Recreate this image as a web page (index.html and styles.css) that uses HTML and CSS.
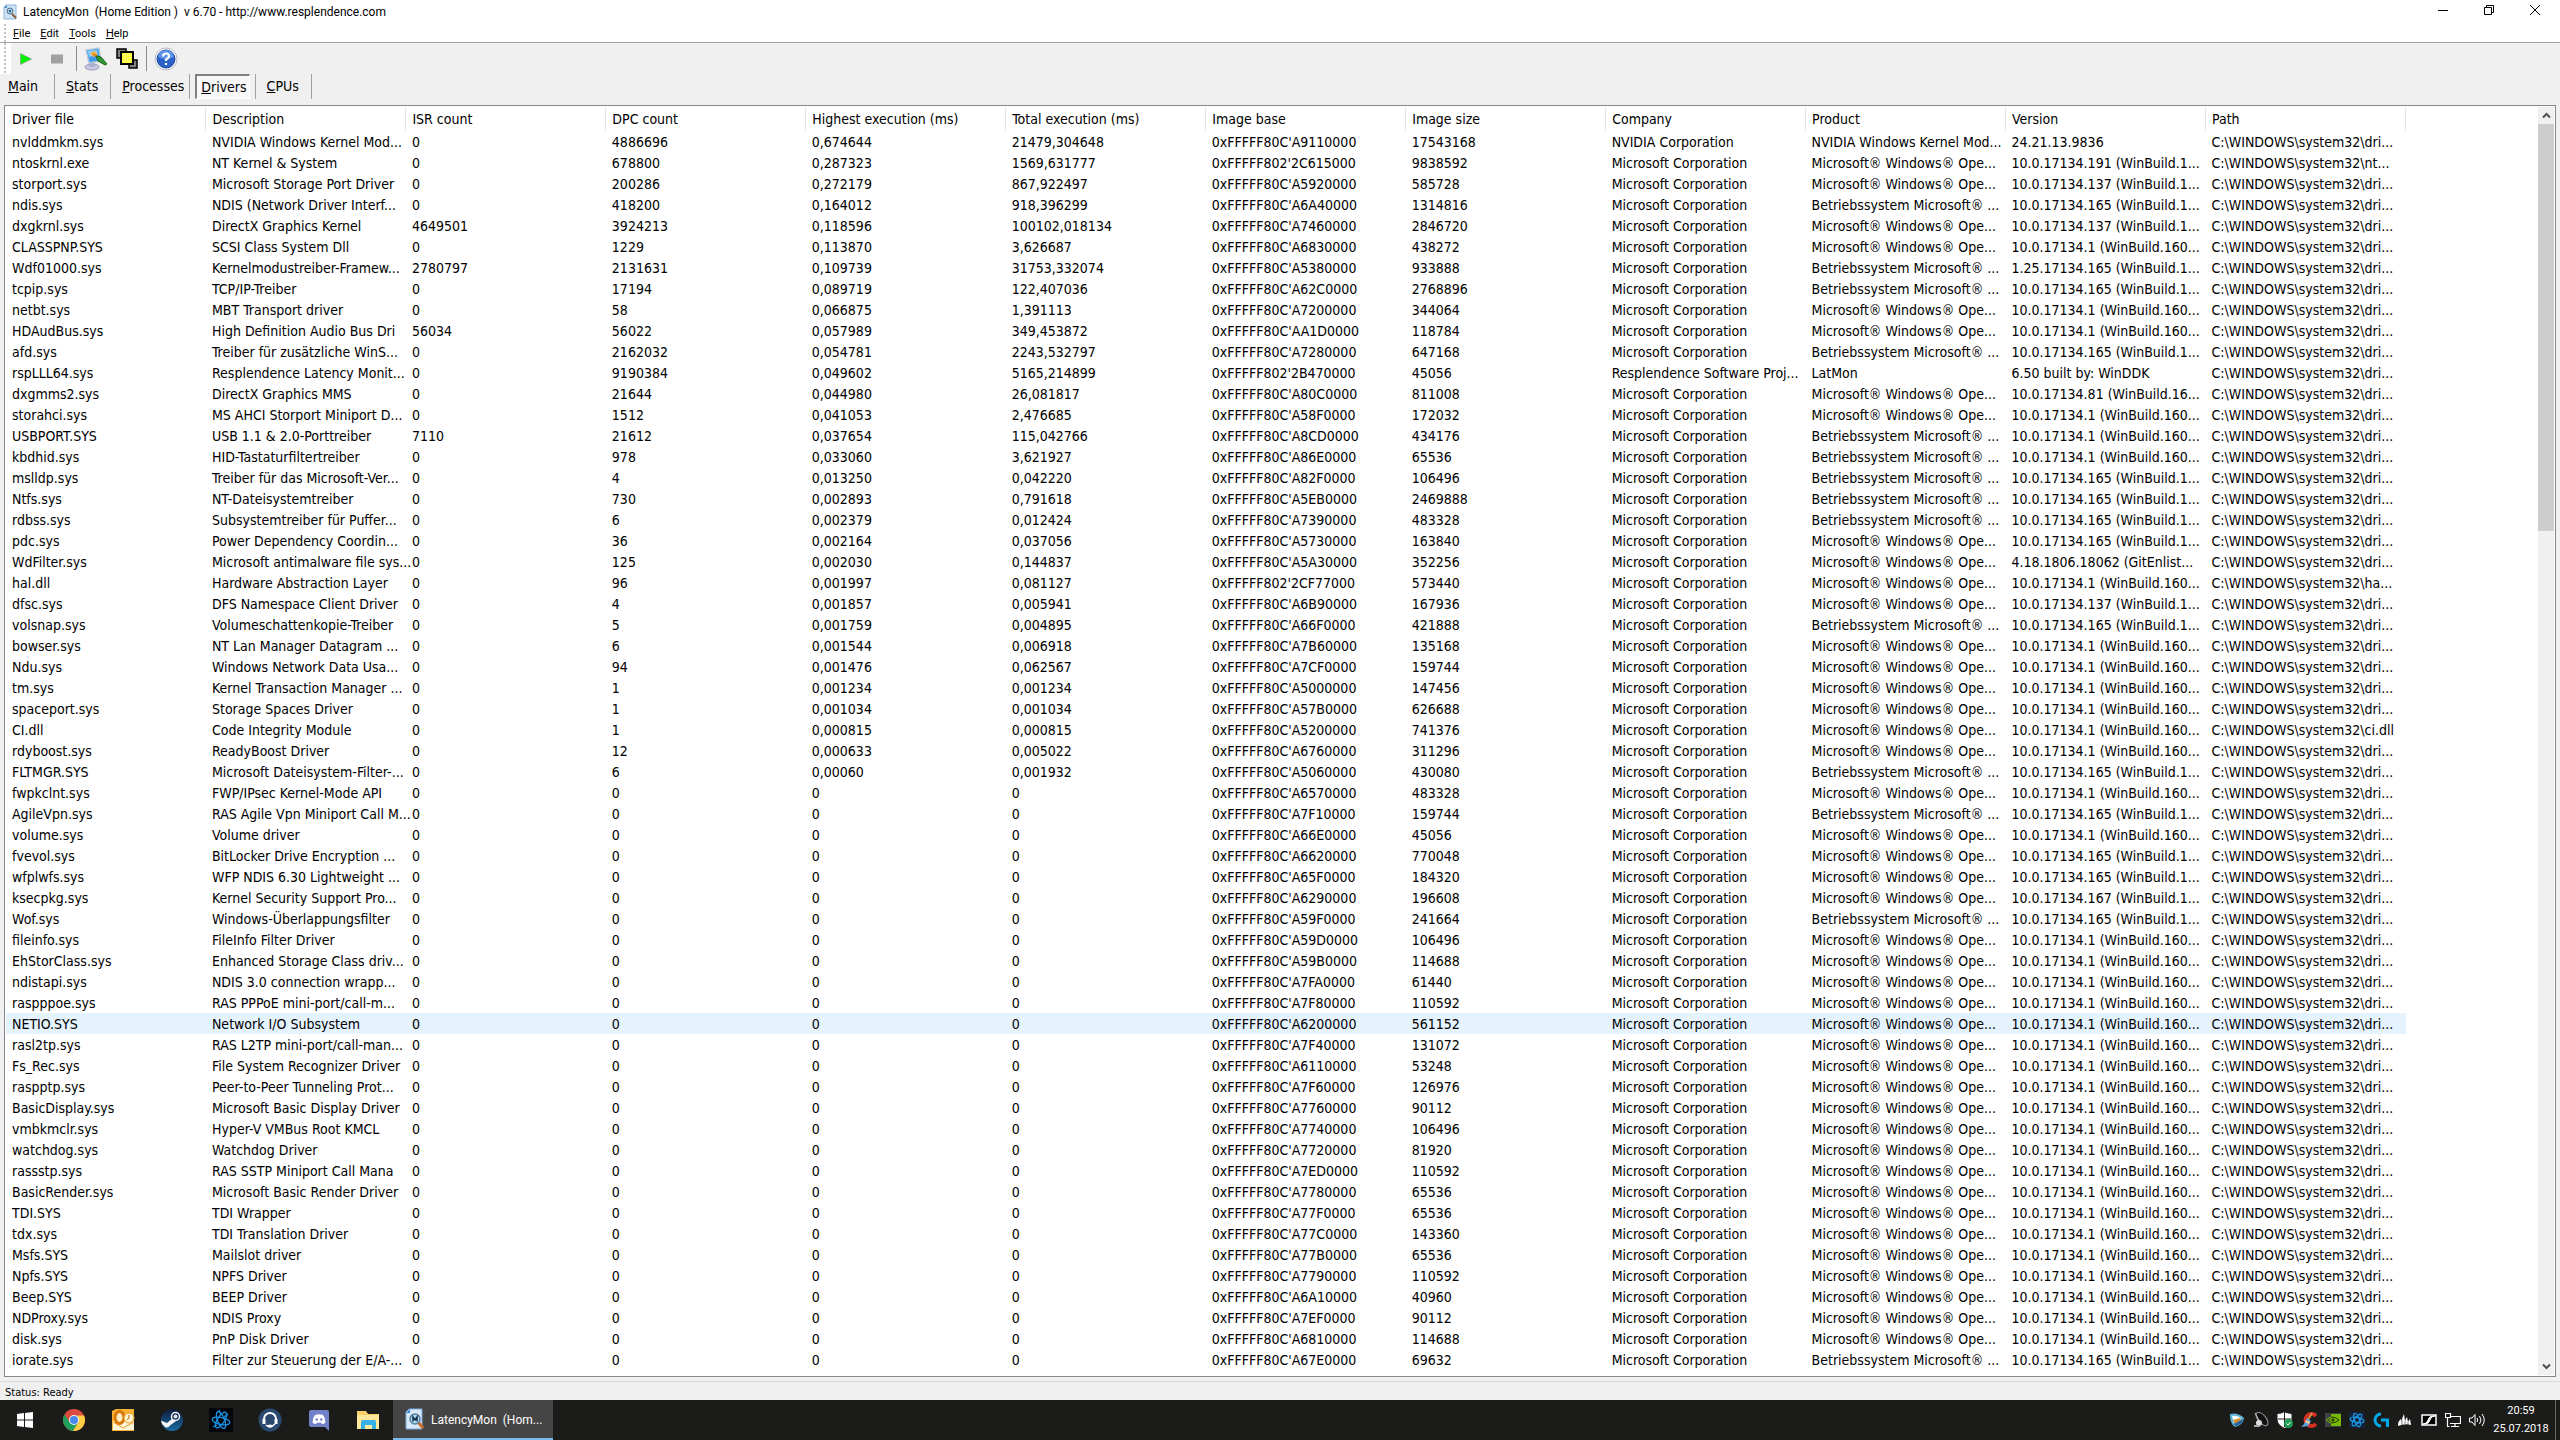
FILE: index.html
```
<!DOCTYPE html>
<html lang="en">
<head>
    <meta charset="UTF-8">
    <meta name="viewport" content="width=device-width, initial-scale=1.0">
    <title>LatencyMon</title>
    <link rel="stylesheet" href="styles.css">
</head>
<body>
    <header class="titlebar">
        <svg class="app-icon" width="14" height="16" viewBox="0 0 14 16">
            <path d="M3 1h10v14H1V3z" fill="#cfe3f7" stroke="#8fb3d9"/>
            <path d="M1 4l3-3v3z" fill="#4d8fd0"/>
            <circle cx="7" cy="7" r="3" fill="#9fd0ee" stroke="#54708c"/>
            <circle cx="7" cy="7" r="1" fill="#1d2c3c"/>
            <path d="M9 10l4 4" stroke="#8a5a3c" stroke-width="2"/>
        </svg>
        <span class="window-title">LatencyMon&nbsp; (Home Edition )&nbsp; v 6.70 - http://www.resplendence.com</span>
        <div class="window-buttons">
            <button type="button" aria-label="Minimize"><svg width="12" height="12" viewBox="0 0 12 12"><path d="M1 6.5h10" stroke="#000" fill="none"/></svg></button>
            <button type="button" aria-label="Restore"><svg width="12" height="12" viewBox="0 0 12 12"><path d="M1.5 3.5h7v7h-7zM3.5 3.500v-2h7v7h-2" stroke="#000" fill="none"/></svg></button>
            <button type="button" aria-label="Close"><svg width="12" height="12" viewBox="0 0 12 12"><path d="M1 1l10 10M11 1L1 11" stroke="#000" fill="none"/></svg></button>
        </div>
    </header>

    <nav class="menubar">
        <button type="button"><u>F</u>ile</button>
        <button type="button"><u>E</u>dit</button>
        <button type="button"><u>T</u>ools</button>
        <button type="button"><u>H</u>elp</button>
    </nav>

    <div class="toolbar">
        <button type="button" aria-label="Start"><svg width="24" height="24" viewBox="0 0 24 24"><path d="M6.5 6.500v11L17.5 12z" fill="#00f400" stroke="#8c8c8c" stroke-width="0.6"/></svg></button>
        <button type="button" aria-label="Stop"><svg width="24" height="24" viewBox="0 0 24 24"><path d="M6 7.500h12v9H6z" fill="#a0a0a0"/></svg></button>
        <span class="divider"></span>
        <button type="button" aria-label="Options">
            <svg width="24" height="24" viewBox="0 0 24 24">
                <ellipse cx="8" cy="20" rx="7" ry="3" fill="#c9cbe0" stroke="#9a9cba"/>
                <path d="M5 15h6v5H5z" fill="#aeb0d0"/>
                <path d="M2 3l13-2 2 13-12 2z" fill="#3f9be6" stroke="#b9cbe0" stroke-width="1.5"/>
                <path d="M4 4l9-1 1 4-9 3z" fill="#8fd0ff"/>
                <path d="M6 6l5-2 3 4-5 2z" fill="#f3b43c"/>
                <path d="M9 7l8 5" stroke="#c98522" stroke-width="2"/>
                <path d="M12 9l5 1 6 7-2 1-7-4z" fill="#2f9a2f" stroke="#1d641d"/>
            </svg>
        </button>
        <button type="button" aria-label="Windows">
            <svg width="24" height="24" viewBox="0 0 24 24">
                <path d="M2 2h9v9H2zM14 13h8v8h-8z" fill="#808080" stroke="#000" stroke-width="1.5"/>
                <path d="M6 5h12v12H6z" fill="#fffb3c" stroke="#000" stroke-width="2"/>
                <path d="M8 8h8M8 11h8M8 14h8" stroke="#fffdb8" stroke-dasharray="1 1"/>
            </svg>
        </button>
        <span class="divider"></span>
        <button type="button" aria-label="Help">
            <svg width="24" height="24" viewBox="0 0 24 24">
                <circle cx="12" cy="12" r="11" fill="#fff" stroke="#b4b8c4"/>
                <circle cx="12" cy="12" r="9" fill="#2b62c9" stroke="#1c3f94"/>
                <path d="M4 10a8 7 0 0 1 16 0q-8 4-16 0z" fill="#5c92ea"/>
                <path d="M9 9.500q0-3 3-3t3 2.500q0 2-3 3.500v1.500M12 16v2" fill="none" stroke="#fff" stroke-width="2.2"/>
            </svg>
        </button>
    </div>

    <nav class="tabs">
        <button type="button"><u>M</u>ain</button>
        <button type="button"><u>S</u>tats</button>
        <button type="button"><u>P</u>rocesses</button>
        <button type="button" class="active"><u>D</u>rivers</button>
        <button type="button"><u>C</u>PUs</button>
    </nav>

    <main class="listview">
        <div class="list-body">
            <table>
                <thead>
                    <tr>
                        <th>Driver file</th>
                        <th>Description</th>
                        <th>ISR count</th>
                        <th>DPC count</th>
                        <th>Highest execution (ms)</th>
                        <th>Total execution (ms)</th>
                        <th>Image base</th>
                        <th>Image size</th>
                        <th>Company</th>
                        <th>Product</th>
                        <th>Version</th>
                        <th>Path</th>
                    </tr>
                </thead>
                <tbody id="drivers"></tbody>
            </table>
        </div>
        <div class="scrollbar">
            <button type="button" aria-label="Scroll up"><svg width="9" height="7" viewBox="0 0 9 7"><path d="M1 5.500l3.500-3.500L8 5.500" fill="none" stroke="#505050" stroke-width="2"/></svg></button>
            <div class="track"><div class="thumb"></div></div>
            <button type="button" aria-label="Scroll down"><svg width="9" height="7" viewBox="0 0 9 7"><path d="M1 1.500L4.500 5 8 1.500" fill="none" stroke="#505050" stroke-width="2"/></svg></button>
        </div>
    </main>

    <div class="statusbar">Status: Ready</div>

    <footer class="taskbar">
        <div class="launchers">
            <button type="button" aria-label="Start menu"><svg width="24" height="24" viewBox="0 0 24 24"><path d="M4 6l7-1v6.500H4zM12 5l8-1v7.500h-8zM4 12.500h7V19l-7-1zM12 12.500h8V20l-8-1z" fill="#fff"/></svg></button>
            <button type="button" aria-label="Chrome">
                <svg width="24" height="24" viewBox="0 0 24 24">
                    <circle cx="12" cy="12" r="11" fill="#dd4b3e"/>
                    <path d="M2.500 6.500A11 11 0 0 0 11 23l5-8.500-8 0z" fill="#1fa05a"/>
                    <path d="M22 7.500A11 11 0 0 1 11 23l5.500-9L15 7.500z" fill="#ffcd41"/>
                    <circle cx="12" cy="12" r="5" fill="#f4f4f4"/>
                    <circle cx="12" cy="12" r="4" fill="#4688f0"/>
                </svg>
            </button>
            <button type="button" aria-label="Outlook">
                <svg width="24" height="24" viewBox="0 0 24 24">
                    <path d="M1 3l4-2h18v22H1z" fill="#f9b233"/>
                    <path d="M2 13h21v9H2z" fill="#fdf3d8"/>
                    <path d="M2 14l10 6 11-6" fill="none" stroke="#eda02c"/>
                    <ellipse cx="8.500" cy="9.500" rx="4.500" ry="6" fill="#fdebc0" stroke="#d9790b" stroke-width="3"/>
                    <circle cx="18" cy="10" r="5" fill="#fff3cf" stroke="#e2971f"/>
                    <path d="M18 7v3l-2 2" fill="none" stroke="#b56a12"/>
                </svg>
            </button>
            <button type="button" aria-label="Steam">
                <svg width="24" height="24" viewBox="0 0 24 24">
                    <defs><linearGradient id="steam" x2="0" y2="1"><stop offset="0" stop-color="#101a3a"/><stop offset="1" stop-color="#1a6ca5"/></linearGradient></defs>
                    <circle cx="12" cy="12" r="11" fill="url(#steam)"/>
                    <path d="M1 12.500l6 2.500 6-5 3 3-6 4.500q-2 3-5 1.500L2 16z" fill="#f2f4f7"/>
                    <circle cx="15.500" cy="8.500" r="4" fill="#132a52" stroke="#f2f4f7" stroke-width="1.5"/>
                    <circle cx="15.500" cy="8.500" r="2" fill="#dfe5ee"/>
                </svg>
            </button>
            <button type="button" aria-label="Battle.net">
                <svg width="24" height="24" viewBox="0 0 24 24">
                    <path d="M0 0h24v24H0z" fill="#020509"/>
                    <g fill="none" stroke="#1a8fe3" stroke-width="1.3">
                        <ellipse cx="12" cy="13" rx="9" ry="3.500" transform="rotate(12 12 13)"/>
                        <ellipse cx="12" cy="12" rx="9" ry="3.500" transform="rotate(68 12 12)"/>
                        <ellipse cx="12" cy="12" rx="9" ry="3.500" transform="rotate(124 12 12)"/>
                        <path d="M10 2l2 5M19 6l-4 3M4 19l4-2"/>
                    </g>
                </svg>
            </button>
            <button type="button" aria-label="TeamSpeak">
                <svg width="24" height="24" viewBox="0 0 24 24">
                    <circle cx="12" cy="12" r="11.500" fill="#2a4a70"/>
                    <path d="M6 13v-2a6 6 0 0 1 12 0v2" fill="none" stroke="#fff" stroke-width="2"/>
                    <path d="M4.500 11h3v5h-3zM16.500 11h3v5h-3z" fill="#fff"/>
                    <path d="M8 17q4 4 9-1" fill="none" stroke="#fff" stroke-width="1.5"/>
                    <ellipse cx="12" cy="18" rx="2.500" ry="1.500" fill="#fff"/>
                </svg>
            </button>
            <button type="button" aria-label="Discord">
                <svg width="24" height="24" viewBox="0 0 24 24">
                    <path d="M4 2h16q2 0 2 2v19l-4-4H4q-2 0-2-2V4q0-2 2-2z" fill="#7280ca"/>
                    <path d="M8 7q4-1.500 8 0 2.500 3 2.500 7.500-1.500 1.500-3.500 1.500l-1-1.500q-2 .5-4 0L9 16q-2 0-3.500-1.500Q5.500 10 8 7z" fill="#fff"/>
                    <circle cx="9.700" cy="11.500" r="1.300" fill="#7280ca"/>
                    <circle cx="14.300" cy="11.500" r="1.300" fill="#7280ca"/>
                </svg>
            </button>
            <button type="button" aria-label="Explorer">
                <svg width="24" height="24" viewBox="0 0 24 24">
                    <path d="M1 3h9l2 3h11v15H1z" fill="#f7d26a"/>
                    <path d="M1 7h22v14H1z" fill="#ffe89b"/>
                    <path d="M5 21v-7q0-2 2-2h11q2 0 2 2v7h-4v-4H9v4z" fill="#35b0e8"/>
                </svg>
            </button>
        </div>
        <button type="button" class="task">
            <svg width="20" height="24" viewBox="0 0 20 24">
                <path d="M4 1h13v20H1V4z" fill="#d6e8fa" stroke="#7faadb"/>
                <path d="M1 5l4-4v4z" fill="#3f86d0"/>
                <path d="M13 14l5 6" stroke="#c8702c" stroke-width="3"/>
                <circle cx="10" cy="11" r="5" fill="#a8dcf4" stroke="#5b7d9c" stroke-width="1.5"/>
                <path d="M8 13.500V9l2 3 2-3v4.500" fill="none" stroke="#152c44" stroke-width="1.5"/>
            </svg>
            <span>LatencyMon&nbsp; (Hom...</span>
        </button>
        <div class="tray">
            <svg viewBox="0 0 16 16"><path d="M1 2q8-2 14 4-1 7-9 9-5-3-5-13z" fill="#5fb4d8"/><path d="M3 4q6-1 9 3l-7 4z" fill="#fff"/><path d="M4 8l7-2 1 3-6 3z" fill="#d6902e"/><path d="M5 12l9-5q-1 6-8 7z" fill="#24619d"/></svg>
            <svg viewBox="0 0 16 16"><ellipse cx="9" cy="7" rx="8" ry="4" transform="rotate(50 9 7)" fill="#111" stroke="#999"/><path d="M2 1l5 9" stroke="#ccc"/><circle cx="6" cy="11" r="3" fill="#ddd"/><path d="M1 14h6" stroke="#aaa" stroke-width="2"/></svg>
            <svg viewBox="0 0 16 16"><path d="M7.500 0q3 2 7 2v5q0 6-7 9-7-3-7-9V2q4 0 7-2z" fill="#fff"/><path d="M7.500 0v15M1 7h13" stroke="#1c1c1a"/><circle cx="11.500" cy="11.500" r="4.500" fill="#1f9d55"/><path d="M9.500 11.500l1.500 1.500 2.500-3" fill="none" stroke="#fff"/></svg>
            <svg viewBox="0 0 16 16"><path d="M15 4A6 6 0 1 0 15 12" fill="none" stroke="#d3301f" stroke-width="4"/><path d="M11 1L7 8" stroke="#c88b4c" stroke-width="2"/><path d="M6 6l4 3-3 5-7 1q4-3 6-9z" fill="#5aa4dd"/><path d="M5 8l4 2-1 2-4-2z" fill="#eecb90"/></svg>
            <svg viewBox="0 0 16 16"><path d="M0 1h16v14H0z" fill="#3d4247"/><path d="M6 2h10v12H6z" fill="#76b900"/><path d="M1 8q6-6 13 0-7 6-13 0zM4 8q3-3 7 0-4 3-7 0z" fill="none" stroke="#76b900"/><path d="M6 5q5 0 8 3-3 3-8 3" fill="none" stroke="#26390a"/><circle cx="8" cy="8" r="1.500" fill="#26390a"/></svg>
            <svg viewBox="0 0 16 16"><path d="M0 0h16v16H0z" fill="#14233b"/><g fill="none" stroke="#1b98e6" stroke-width="1.2"><ellipse cx="8" cy="8" rx="7" ry="2.500" transform="rotate(12 8 8)"/><ellipse cx="8" cy="8" rx="7" ry="2.500" transform="rotate(70 8 8)"/><ellipse cx="8" cy="8" rx="7" ry="2.500" transform="rotate(128 8 8)"/></g></svg>
            <svg viewBox="0 0 16 16"><path d="M8 2A6 6 0 1 0 8 14" fill="none" stroke="#00a8e8" stroke-width="3"/><path d="M8 8h6.500v7" fill="none" stroke="#00a8e8" stroke-width="3"/></svg>
            <svg viewBox="0 0 16 16"><path d="M1 13q0-4 3-6l1 3q0-5 2-8l1 7q1-3 2-4l1 5q1-2 2-3l1 6q-6-2-13 1z" fill="#fff"/><path d="M5 9v4M8 9v3M11 10v3" stroke="#1c1c1a" stroke-width="0.6"/></svg>
            <svg viewBox="0 0 16 16"><path d="M1 3h14v10H1z" fill="#000" stroke="#fff" stroke-width="1.5"/><path d="M2 12q4 0 5-4t5-4h2q-4 0-5 4t-5 4z" fill="#fff" stroke="#fff"/></svg>
            <svg viewBox="0 0 16 16"><path d="M5 4.500h10.500v7H5M10 11.500v3M6 14.500h8M.5 1.500h5v4h-5zM2.500 5.500v9h2" fill="none" stroke="#fff" stroke-width="1.2"/></svg>
            <svg viewBox="0 0 16 16"><path d="M.5 6h2.500l3-3.500v11L3 10H.5z" fill="none" stroke="#fff"/><path d="M8 6q1.500 2 0 4M10.500 4q3 4 0 8M13 2q4.500 6 0 12" fill="none" stroke="#fff"/></svg>
        </div>
        <div class="clock"><span>20:59</span><span>25.07.2018</span></div>
        <button type="button" class="show-desktop" aria-label="Show desktop"></button>
    </footer>

    <script src="drivers.js"></script>
</body>
</html>
```
FILE: styles.css
```
* {
    box-sizing: border-box;
}
body {
    display: flex;
    flex-direction: column;
    height: 100vh;
    margin: 0;
    overflow: hidden;
    background: #f0f0f0;
    color: #000;
    font-family: 'DejaVu Sans Condensed', 'DejaVu Sans', sans-serif;
    font-size: 14px;
}
button {
    margin: 0;
    padding: 0;
    border: none;
    background: none;
    color: inherit;
    font: inherit;
}
svg {
    display: block;
    flex: none;
}

/* title and menu */
.titlebar {
    display: flex;
    align-items: center;
    height: 24px;
    padding-left: 3px;
    background: #fff;
    font-family: Roboto, sans-serif;
    font-size: 12px;
}
.window-title {
    margin-left: 6px;
}
.window-buttons {
    display: flex;
    align-self: flex-start;
    margin-left: auto;
    padding-right: 2px;
}
.window-buttons button {
    display: flex;
    align-items: center;
    justify-content: center;
    width: 46px;
    height: 20px;
}
.menubar {
    display: flex;
    gap: 10px;
    height: 19px;
    padding-left: 4px;
    background: #fff;
    border-bottom: 1px solid #a0a0a0;
    font-family: Roboto, sans-serif;
    font-size: 11px;
}

/* dotted grips at the left edge */
.menubar::before,
.toolbar::before {
    content: "";
    align-self: stretch;
    width: 2px;
    background: repeating-linear-gradient(#c4c4c4 0 2px, #fff 2px 4px);
}
.menubar::before {
    margin-right: -3px;
}

/* toolbar */
.toolbar {
    display: flex;
    align-items: center;
    gap: 7px;
    height: 31px;
    padding-left: 4px;
    background: linear-gradient(to right, #fff 11px, #f0f0f0 11px);
}
.toolbar::before {
    margin-right: 1px;
}
.toolbar .divider {
    width: 1px;
    height: 25px;
    background: #8c8c8c;
}

/* tabs */
.tabs {
    display: flex;
    height: 31px;
    padding-bottom: 6px;
}
.tabs button {
    padding: 0 12px 2px 11px;
    border-right: 1px solid #a0a0a0;
}
.tabs button:first-child {
    padding-left: 8px;
    padding-right: 16px;
}
.tabs button:nth-child(3) {
    padding-right: 5px;
}
.tabs .active {
    margin: 0 5px;
    padding: 0 2px 0 4px;
    border: 1px solid #fff;
    border-top: 2px solid #808080;
    border-left: 2px solid #808080;
    background: #f8f8f8;
}
.tabs button:last-child {
    border-left: 1px solid #a0a0a0;
}

/* driver list */
.listview {
    display: flex;
    flex: 1;
    min-height: 0;
    margin: 0 4px 4px;
    padding: 1px;
    border: 1px solid #828790;
    background: #fff;
}
.list-body {
    flex: 1;
    overflow: hidden;
}
table {
    width: 2400px;
    table-layout: fixed;
    border-collapse: collapse;
}
th {
    height: 24px;
    border-right: 1px solid #e5e5e5;
    font-weight: normal;
}
th,
td {
    padding: 0 0 0 6px;
    text-align: left;
    white-space: nowrap;
}
td {
    height: 21px;
    padding-top: 2px;
    line-height: 19px;
}
tr.hot {
    background: #e5f3ff;
}
.scrollbar {
    display: flex;
    flex-direction: column;
    width: 16px;
    background: #f0f0f0;
}
.scrollbar button {
    display: flex;
    align-items: center;
    justify-content: center;
    height: 17px;
}
.track {
    flex: 1;
}
.thumb {
    height: 33%;
    background: #cdcdcd;
}

.statusbar {
    height: 19px;
    padding: 4px 5px 0;
    border-top: 1px solid #d7d7d7;
    font-size: 11px;
    line-height: 14px;
}

/* taskbar */
.taskbar {
    display: flex;
    align-items: stretch;
    height: 40px;
    background: #1b1c1a;
    color: #fff;
    font-family: Roboto, sans-serif;
    font-size: 12px;
}
.launchers {
    display: flex;
    align-items: center;
    gap: 25px;
    padding: 0 13px;
}
.task {
    display: flex;
    align-items: center;
    gap: 6px;
    width: 160px;
    padding: 2px 12px 0;
    border-bottom: 2px solid #76b9ed;
    background: #454545;
    white-space: nowrap;
}
.tray {
    display: flex;
    align-items: center;
    gap: 8px;
    margin-left: auto;
    margin-right: 2px;
}
.tray svg {
    width: 16px;
    height: 16px;
}
.clock {
    display: flex;
    flex-direction: column;
    justify-content: center;
    width: 68px;
    font-size: 11px;
    line-height: 18px;
    text-align: center;
}
.show-desktop {
    width: 5px;
    border-left: 1px solid #6a6a68;
}
```
FILE: drivers.js
```
const MS = 'Microsoft Corporation';
const WIN = 'Microsoft® Windows® Ope...';
const BS = 'Betriebssystem Microsoft® ...';
const V1 = '10.0.17134.1 (WinBuild.160...';
const V137 = '10.0.17134.137 (WinBuild.1...';
const V165 = '10.0.17134.165 (WinBuild.1...';
const DRI = 'C:\\WINDOWS\\system32\\dri...';

// file, description, isr, dpc, highest, total, base, size, product, version, company, path
const drivers = [
    ['nvlddmkm.sys', 'NVIDIA Windows Kernel Mod...', '0', '4886696', '0,674644', '21479,304648', "80C'A9110000", '17543168', 'NVIDIA Windows Kernel Mod...', '24.21.13.9836', 'NVIDIA Corporation'],
    ['ntoskrnl.exe', 'NT Kernel & System', '0', '678800', '0,287323', '1569,631777', "802'2C615000", '9838592', WIN, '10.0.17134.191 (WinBuild.1...', MS, 'C:\\WINDOWS\\system32\\nt...'],
    ['storport.sys', 'Microsoft Storage Port Driver', '0', '200286', '0,272179', '867,922497', "80C'A5920000", '585728', WIN, V137],
    ['ndis.sys', 'NDIS (Network Driver Interf...', '0', '418200', '0,164012', '918,396299', "80C'A6A40000", '1314816', BS, V165],
    ['dxgkrnl.sys', 'DirectX Graphics Kernel', '4649501', '3924213', '0,118596', '100102,018134', "80C'A7460000", '2846720', WIN, V137],
    ['CLASSPNP.SYS', 'SCSI Class System Dll', '0', '1229', '0,113870', '3,626687', "80C'A6830000", '438272', WIN, V1],
    ['Wdf01000.sys', 'Kernelmodustreiber-Framew...', '2780797', '2131631', '0,109739', '31753,332074', "80C'A5380000", '933888', BS, '1.25.17134.165 (WinBuild.1...'],
    ['tcpip.sys', 'TCP/IP-Treiber', '0', '17194', '0,089719', '122,407036', "80C'A62C0000", '2768896', BS, V165],
    ['netbt.sys', 'MBT Transport driver', '0', '58', '0,066875', '1,391113', "80C'A7200000", '344064', WIN, V1],
    ['HDAudBus.sys', 'High Definition Audio Bus Dri', '56034', '56022', '0,057989', '349,453872', "80C'AA1D0000", '118784', WIN, V1],
    ['afd.sys', 'Treiber für zusätzliche WinS...', '0', '2162032', '0,054781', '2243,532797', "80C'A7280000", '647168', BS, V165],
    ['rspLLL64.sys', 'Resplendence Latency Monit...', '0', '9190384', '0,049602', '5165,214899', "802'2B470000", '45056', 'LatMon', '6.50 built by: WinDDK', 'Resplendence Software Proj...'],
    ['dxgmms2.sys', 'DirectX Graphics MMS', '0', '21644', '0,044980', '26,081817', "80C'A80C0000", '811008', WIN, '10.0.17134.81 (WinBuild.16...'],
    ['storahci.sys', 'MS AHCI Storport Miniport D...', '0', '1512', '0,041053', '2,476685', "80C'A58F0000", '172032', WIN, V1],
    ['USBPORT.SYS', 'USB 1.1 & 2.0-Porttreiber', '7110', '21612', '0,037654', '115,042766', "80C'A8CD0000", '434176', BS, V1],
    ['kbdhid.sys', 'HID-Tastaturfiltertreiber', '0', '978', '0,033060', '3,621927', "80C'A86E0000", '65536', BS, V1],
    ['mslldp.sys', 'Treiber für das Microsoft-Ver...', '0', '4', '0,013250', '0,042220', "80C'A82F0000", '106496', BS, V165],
    ['Ntfs.sys', 'NT-Dateisystemtreiber', '0', '730', '0,002893', '0,791618', "80C'A5EB0000", '2469888', BS, V165],
    ['rdbss.sys', 'Subsystemtreiber für Puffer...', '0', '6', '0,002379', '0,012424', "80C'A7390000", '483328', BS, V165],
    ['pdc.sys', 'Power Dependency Coordin...', '0', '36', '0,002164', '0,037056', "80C'A5730000", '163840', WIN, V165],
    ['WdFilter.sys', 'Microsoft antimalware file sys...', '0', '125', '0,002030', '0,144837', "80C'A5A30000", '352256', WIN, '4.18.1806.18062 (GitEnlist...'],
    ['hal.dll', 'Hardware Abstraction Layer', '0', '96', '0,001997', '0,081127', "802'2CF77000", '573440', WIN, V1, MS, 'C:\\WINDOWS\\system32\\ha...'],
    ['dfsc.sys', 'DFS Namespace Client Driver', '0', '4', '0,001857', '0,005941', "80C'A6B90000", '167936', WIN, V137],
    ['volsnap.sys', 'Volumeschattenkopie-Treiber', '0', '5', '0,001759', '0,004895', "80C'A66F0000", '421888', BS, V165],
    ['bowser.sys', 'NT Lan Manager Datagram ...', '0', '6', '0,001544', '0,006918', "80C'A7B60000", '135168', WIN, V1],
    ['Ndu.sys', 'Windows Network Data Usa...', '0', '94', '0,001476', '0,062567', "80C'A7CF0000", '159744', WIN, V1],
    ['tm.sys', 'Kernel Transaction Manager ...', '0', '1', '0,001234', '0,001234', "80C'A5000000", '147456', WIN, V1],
    ['spaceport.sys', 'Storage Spaces Driver', '0', '1', '0,001034', '0,001034', "80C'A57B0000", '626688', WIN, V1],
    ['CI.dll', 'Code Integrity Module', '0', '1', '0,000815', '0,000815', "80C'A5200000", '741376', WIN, V1, MS, 'C:\\WINDOWS\\system32\\ci.dll'],
    ['rdyboost.sys', 'ReadyBoost Driver', '0', '12', '0,000633', '0,005022', "80C'A6760000", '311296', WIN, V1],
    ['FLTMGR.SYS', 'Microsoft Dateisystem-Filter-...', '0', '6', '0,00060', '0,001932', "80C'A5060000", '430080', BS, V165],
    ['fwpkclnt.sys', 'FWP/IPsec Kernel-Mode API', '0', '0', '0', '0', "80C'A6570000", '483328', WIN, V1],
    ['AgileVpn.sys', 'RAS Agile Vpn Miniport Call M...', '0', '0', '0', '0', "80C'A7F10000", '159744', BS, V165],
    ['volume.sys', 'Volume driver', '0', '0', '0', '0', "80C'A66E0000", '45056', WIN, V1],
    ['fvevol.sys', 'BitLocker Drive Encryption ...', '0', '0', '0', '0', "80C'A6620000", '770048', WIN, V165],
    ['wfplwfs.sys', 'WFP NDIS 6.30 Lightweight ...', '0', '0', '0', '0', "80C'A65F0000", '184320', WIN, V165],
    ['ksecpkg.sys', 'Kernel Security Support Pro...', '0', '0', '0', '0', "80C'A6290000", '196608', WIN, '10.0.17134.167 (WinBuild.1...'],
    ['Wof.sys', 'Windows-Überlappungsfilter', '0', '0', '0', '0', "80C'A59F0000", '241664', BS, V165],
    ['fileinfo.sys', 'FileInfo Filter Driver', '0', '0', '0', '0', "80C'A59D0000", '106496', WIN, V1],
    ['EhStorClass.sys', 'Enhanced Storage Class driv...', '0', '0', '0', '0', "80C'A59B0000", '114688', WIN, V1],
    ['ndistapi.sys', 'NDIS 3.0 connection wrapp...', '0', '0', '0', '0', "80C'A7FA0000", '61440', WIN, V1],
    ['raspppoe.sys', 'RAS PPPoE mini-port/call-m...', '0', '0', '0', '0', "80C'A7F80000", '110592', WIN, V1],
    ['NETIO.SYS', 'Network I/O Subsystem', '0', '0', '0', '0', "80C'A6200000", '561152', WIN, V1],
    ['rasl2tp.sys', 'RAS L2TP mini-port/call-man...', '0', '0', '0', '0', "80C'A7F40000", '131072', WIN, V1],
    ['Fs_Rec.sys', 'File System Recognizer Driver', '0', '0', '0', '0', "80C'A6110000", '53248', WIN, V1],
    ['raspptp.sys', 'Peer-to-Peer Tunneling Prot...', '0', '0', '0', '0', "80C'A7F60000", '126976', WIN, V1],
    ['BasicDisplay.sys', 'Microsoft Basic Display Driver', '0', '0', '0', '0', "80C'A7760000", '90112', WIN, V1],
    ['vmbkmclr.sys', 'Hyper-V VMBus Root KMCL', '0', '0', '0', '0', "80C'A7740000", '106496', WIN, V1],
    ['watchdog.sys', 'Watchdog Driver', '0', '0', '0', '0', "80C'A7720000", '81920', WIN, V1],
    ['rassstp.sys', 'RAS SSTP Miniport Call Mana', '0', '0', '0', '0', "80C'A7ED0000", '110592', WIN, V1],
    ['BasicRender.sys', 'Microsoft Basic Render Driver', '0', '0', '0', '0', "80C'A7780000", '65536', WIN, V1],
    ['TDI.SYS', 'TDI Wrapper', '0', '0', '0', '0', "80C'A77F0000", '65536', WIN, V1],
    ['tdx.sys', 'TDI Translation Driver', '0', '0', '0', '0', "80C'A77C0000", '143360', WIN, V1],
    ['Msfs.SYS', 'Mailslot driver', '0', '0', '0', '0', "80C'A77B0000", '65536', WIN, V1],
    ['Npfs.SYS', 'NPFS Driver', '0', '0', '0', '0', "80C'A7790000", '110592', WIN, V1],
    ['Beep.SYS', 'BEEP Driver', '0', '0', '0', '0', "80C'A6A10000", '40960', WIN, V1],
    ['NDProxy.sys', 'NDIS Proxy', '0', '0', '0', '0', "80C'A7EF0000", '90112', WIN, V1],
    ['disk.sys', 'PnP Disk Driver', '0', '0', '0', '0', "80C'A6810000", '114688', WIN, V1],
    ['iorate.sys', 'Filter zur Steuerung der E/A-...', '0', '0', '0', '0', "80C'A67E0000", '69632', BS, V165]
];

const tbody = document.getElementById('drivers');
drivers.forEach(([file, desc, isr, dpc, high, total, base, size, product, version, company = MS, path = DRI]) => {
    const row = tbody.insertRow();
    if (file === 'NETIO.SYS') row.className = 'hot';
    [file, desc, isr, dpc, high, total, '0xFFFFF' + base, size, company, product, version, path].forEach((text) => {
        row.insertCell().textContent = text;
    });
});
```
